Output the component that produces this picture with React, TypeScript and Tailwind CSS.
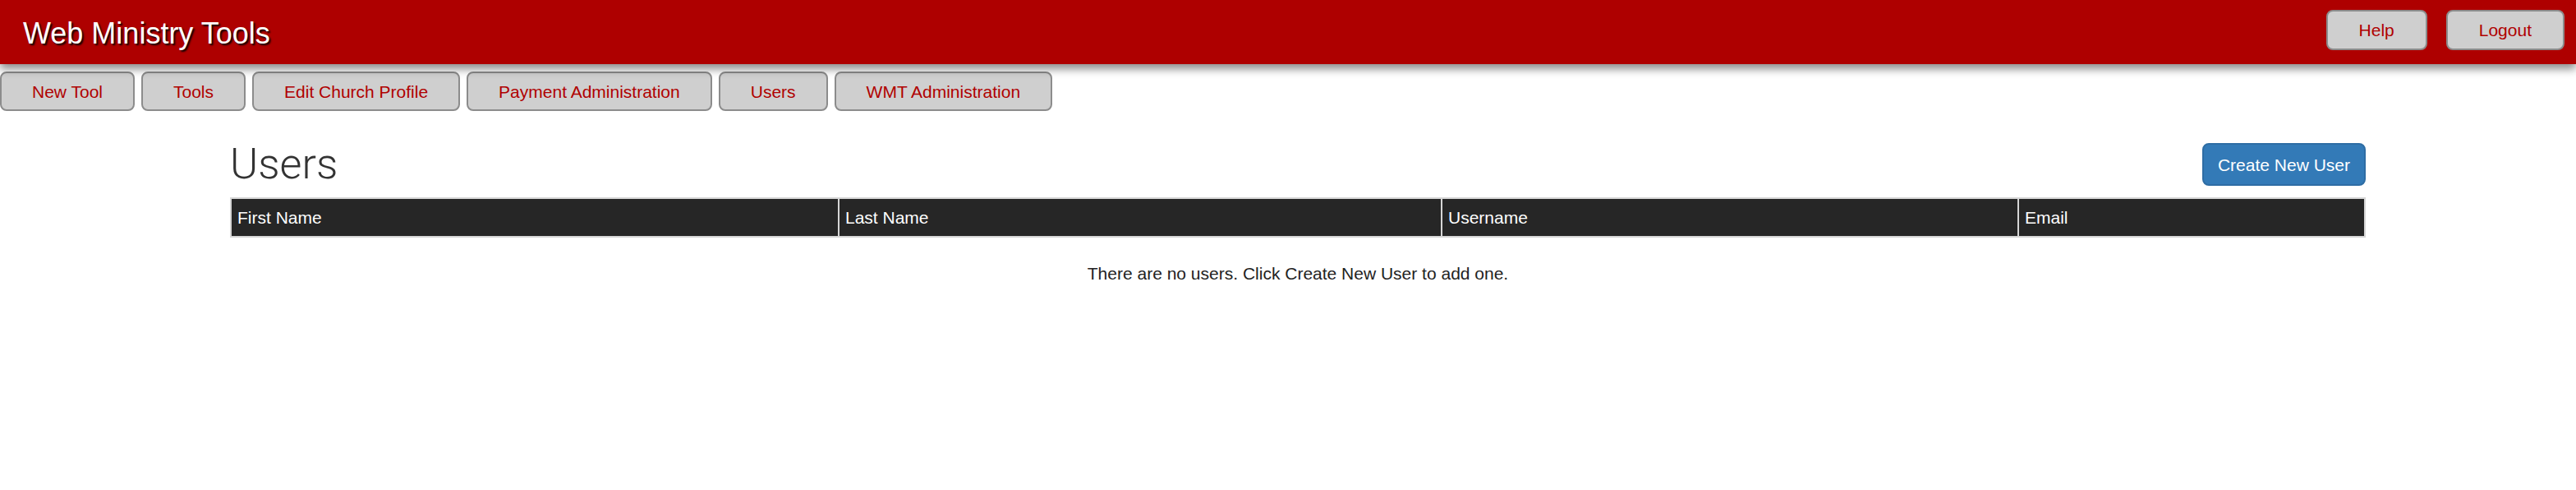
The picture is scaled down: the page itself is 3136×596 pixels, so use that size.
import React from 'react';

const navItems = ['New Tool', 'Tools', 'Edit Church Profile', 'Payment Administration', 'Users', 'WMT Administration'];

const columns = [
  { label: 'First Name', width: 'w-[740px]' },
  { label: 'Last Name', width: 'w-[734px]' },
  { label: 'Username', width: 'w-[702px]' },
  { label: 'Email', width: '' },
];

function GrayButton({ label, tall }: { label: string; tall?: boolean }) {
  return (
    <button
      className={`${tall ? 'h-[49px] px-[38px]' : 'h-[48px] px-[37px]'} border-2 border-[#8c8c8c] rounded-[8px] bg-[#cfcfcf] text-[#b00000] text-[21px] leading-none whitespace-nowrap`}
    >
      {label}
    </button>
  );
}

export default function App() {
  const users: { id: number; first: string; last: string; username: string; email: string }[] = [];

  return (
    <div className="min-h-screen bg-white font-['Liberation_Sans',Arial,sans-serif]">
      {/* header */}
      <header className="relative z-10 h-[78px] bg-[#ae0000] flex items-start justify-between pl-[28px] pr-[14px] shadow-[0_6px_10px_rgba(0,0,0,0.45)]">
        <h1 className="mt-[20px] text-[36px] leading-[41px] text-white [text-shadow:2px_2px_2px_rgba(0,0,0,0.9)]">
          Web Ministry Tools
        </h1>
        <div className="mt-[12px] flex gap-[23px]">
          <GrayButton label="Help" tall />
          <GrayButton label="Logout" tall />
        </div>
      </header>

      {/* tool nav */}
      <nav className="mt-[9px] flex gap-[8px]">
        {navItems.map((item) => (
          <GrayButton key={item} label={item} />
        ))}
      </nav>

      {/* users page */}
      <main className="w-[2600px] ml-[280px] mt-[39px]">
        <div className="flex items-center justify-between h-[52px]">
          <h2 className="font-['Roboto',sans-serif] font-light text-[52px] leading-none text-[#333]">Users</h2>
          <button className="h-[52px] px-[17px] border-2 border-[#2e6da4] rounded-[8px] bg-[#337ab7] text-white text-[21px] leading-none">
            Create New User
          </button>
        </div>

        <table className="mt-[14px] w-full table-fixed border-collapse">
          <thead>
            <tr className="bg-[#262626]">
              {columns.map((col) => (
                <th
                  key={col.label}
                  className={`${col.width} h-[47px] border-2 border-[#d6d6d6] px-[7px] text-left font-normal text-white text-[21px] leading-[24px]`}
                >
                  {col.label}
                </th>
              ))}
            </tr>
          </thead>
          <tbody>
            {users.map((u) => (
              <tr key={u.id}>
                <td>{u.first}</td>
                <td>{u.last}</td>
                <td>{u.username}</td>
                <td>{u.email}</td>
              </tr>
            ))}
          </tbody>
        </table>

        {users.length === 0 && (
          <p className="mt-[32px] text-center text-[21px] leading-[24px] text-[#222]">
            There are no users. Click Create New User to add one.
          </p>
        )}
      </main>
    </div>
  );
}
